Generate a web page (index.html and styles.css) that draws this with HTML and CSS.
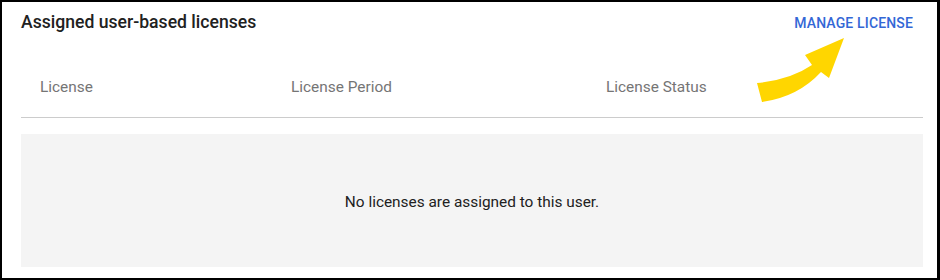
FILE: index.html
```html
<!DOCTYPE html>
<html>
<head>
<meta charset="utf-8">
<link rel="stylesheet" href="styles.css">
</head>
<body>
<div class="frame">
  <div class="title-row">
    <h2 class="title">Assigned user-based licenses</h2>
    <button class="manage">MANAGE LICENSE</button>
  </div>
  <div class="thead">
    <div class="th">License</div>
    <div class="th">License Period</div>
    <div class="th">License Status</div>
  </div>
  <div class="empty">No licenses are assigned to this user.</div>
  <svg class="arrow" width="100" height="80" viewBox="750 30 100 80" xmlns="http://www.w3.org/2000/svg">
    <path d="M757,83 Q790,80 812,65 L805,55 L844,38 L829,78 L821,72 Q798,97 762,102 Z" fill="#ffd600"/>
  </svg>
</div>
</body>
</html>
```
FILE: styles.css
```css
html, body {
  margin: 0;
  padding: 0;
  background: #fff;
}
.frame {
  position: relative;
  width: 940px;
  height: 280px;
  box-sizing: border-box;
  border: 2px solid #000;
  border-right-width: 3px;
  padding: 11px 14px 11px 19px;
  font-family: Roboto, "Liberation Sans", sans-serif;
  display: flex;
  flex-direction: column;
}
.title-row {
  height: 37px;
  display: flex;
  align-items: baseline;
  justify-content: space-between;
}
.title {
  margin: 0;
  font-size: 17.6px;
  line-height: 19px;
  font-weight: 500;
  color: #212121;
}
.manage {
  border: none;
  background: transparent;
  padding: 0 10px 0 0;
  font-family: Roboto, "Liberation Sans", sans-serif;
  font-size: 14px;
  line-height: 19px;
  font-weight: 500;
  letter-spacing: 0.15px;
  color: #3367d6;
}
.thead {
  display: grid;
  grid-template-columns: 251px 315px 1fr;
  padding: 28px 0 21px;
  border-bottom: 1px solid #cccccc;
}
.th {
  padding-left: 19px;
  font-size: 15.4px;
  line-height: 18px;
  color: #757575;
}
.empty {
  margin-top: 16px;
  height: 133px;
  background: #f4f4f4;
  display: flex;
  align-items: center;
  justify-content: center;
  padding-top: 3px;
  box-sizing: border-box;
  font-size: 15.4px;
  line-height: 18px;
  color: #212121;
}
.arrow {
  position: absolute;
  left: 748px;
  top: 28px;
}
```
